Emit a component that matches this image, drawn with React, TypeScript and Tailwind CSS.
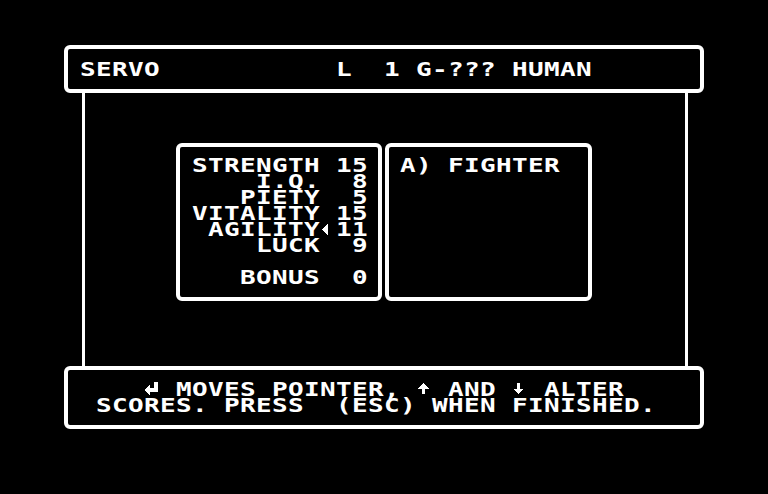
import React from 'react';

// Character grid: every cell is 16px wide and 16px tall.
const Txt = ({ children }: { children: string }) => (
  <span className="h-4 scale-y-[0.74] whitespace-pre">{children}</span>
);

const Row = ({ children }: { children?: React.ReactNode }) => <div className="flex h-4">{children}</div>;

// Little glyphs that the font doesn't have, drawn one cell wide.
const Pointer = () => (
  <svg width="16" height="16" viewBox="0 0 16 16" shapeRendering="crispEdges" className="shrink-0">
    <polygon points="8,3 2,8.5 8,14" fill="#fff" />
  </svg>
);

const ReturnArrow = () => (
  <svg width="16" height="16" viewBox="0 0 16 16" shapeRendering="crispEdges" className="shrink-0">
    <rect x="10" y="1" width="4" height="10" fill="#fff" />
    <rect x="5" y="7" width="9" height="4" fill="#fff" />
    <polygon points="0,9 6,3 6,15" fill="#fff" />
  </svg>
);

const UpArrow = () => (
  <svg width="16" height="16" viewBox="0 0 16 16" shapeRendering="crispEdges" className="shrink-0">
    <polygon points="7.5,2 13,7.5 2,7.5" fill="#fff" />
    <rect x="6" y="7" width="3" height="6" fill="#fff" />
  </svg>
);

const DownArrow = () => (
  <svg width="16" height="16" viewBox="0 0 16 16" shapeRendering="crispEdges" className="shrink-0">
    <rect x="5" y="2" width="3" height="6" fill="#fff" />
    <polygon points="6.5,13 12,7.5 1,7.5" fill="#fff" />
  </svg>
);

const stats: [string, string][] = [
  ['STRENGTH', '15'],
  ['I.Q.', ' 8'],
  ['PIETY', ' 5'],
  ['VITALITY', '15'],
  ['AGILITY', '11'],
  ['LUCK', ' 9'],
];

export default function App() {
  const selected = 'AGILITY';

  return (
    <div className="h-[494px] w-[768px] bg-black px-16 pt-[45px] font-['DejaVu_Sans_Mono',monospace] text-[26px] font-bold leading-4 tracking-[0.347px] text-white">
      {/* character name bar */}
      <div className="h-12 rounded-[6px] border-4 border-white pl-3 pt-3">
        <Row>
          <Txt>{'SERVO           L  1 G-??? HUMAN'}</Txt>
        </Row>
      </div>

      <div className="ml-[18px] mr-4 flex h-[273px] items-start border-x-[3px] border-white pl-[91px] pt-[50px]">
        {/* attribute scores */}
        <div className="h-[158px] w-[206px] rounded-[6px] border-4 border-white pl-3 pt-[10px]">
          {stats.map(([name, value]) => (
            <Row key={name}>
              <Txt>{name.padStart(8, ' ')}</Txt>
              {name === selected ? <Pointer /> : <Txt> </Txt>}
              <Txt>{value}</Txt>
            </Row>
          ))}
          <Row />
          <Row>
            <Txt>{'   BONUS  0'}</Txt>
          </Row>
        </div>

        {/* available classes */}
        <div className="ml-[3px] h-[158px] w-[207px] rounded-[6px] border-4 border-white pl-[11px] pt-[10px]">
          <Row>
            <Txt>A) FIGHTER</Txt>
          </Row>
        </div>
      </div>

      {/* help text */}
      <div className="h-[63px] rounded-[6px] border-4 border-white pl-3 pt-[11px]">
        <Row>
          <Txt>{'    '}</Txt>
          <ReturnArrow />
          <Txt>{' MOVES POINTER, '}</Txt>
          <UpArrow />
          <Txt>{' AND '}</Txt>
          <DownArrow />
          <Txt>{' ALTER'}</Txt>
        </Row>
        <Row>
          <Txt>{' SCORES. PRESS  (ESC) WHEN FINISHED.'}</Txt>
        </Row>
      </div>
    </div>
  );
}
